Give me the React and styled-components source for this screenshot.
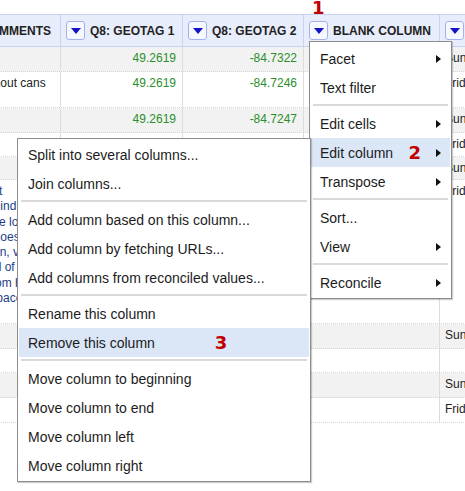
import React from "react";
import styled, { createGlobalStyle } from "styled-components";

const GlobalStyle = createGlobalStyle`
  html, body {
    margin: 0;
    padding: 0;
    background: #fff;
    overflow: hidden;
  }
  body {
    font-family: "Liberation Sans", Arial, sans-serif;
  }
`;

const COLUMN_WIDTHS = [109, 122, 121, 136, 120];
const GRID = COLUMN_WIDTHS.map((w) => `${w}px`).join(" ");

const Page = styled.div`
  position: relative;
  width: 465px;
  height: 491px;
  padding-top: 14px;
  box-sizing: border-box;
  overflow: hidden;
`;

const Viewport = styled.div`
  overflow: hidden;
`;

const Table = styled.div`
  width: 608px;
  margin-left: -48px;
`;

const HeaderRow = styled.div`
  display: grid;
  grid-template-columns: ${GRID};
  height: 33px;
  box-sizing: border-box;
  background: #e8edfc;
  border-top: 1px solid #c9d2f3;
  border-bottom: 1px solid #c9d2f3;
`;

const HeaderCell = styled.div`
  display: flex;
  align-items: center;
  gap: 5px;
  padding-left: 5px;
  border-right: 1px solid #c9d2f3;
  font-size: 12px;
  font-weight: bold;
  color: #222;
  white-space: nowrap;
  overflow: hidden;
`;

const DropButton = styled.span`
  flex: none;
  width: 19px;
  height: 19px;
  box-sizing: border-box;
  border: 1px solid #a3b2ee;
  border-radius: 3px;
  background: #f6f8ff;
  display: flex;
  align-items: center;
  justify-content: center;
  &::after {
    content: "";
    margin-top: 1px;
    border-left: 5px solid transparent;
    border-right: 5px solid transparent;
    border-top: 6px solid #1414c4;
  }
`;

const Row = styled.div`
  display: grid;
  grid-template-columns: ${GRID};
  height: ${({ $h }) => $h}px;
  box-sizing: border-box;
  background: ${({ $shaded }) => ($shaded ? "#f2f2f2" : "#fff")};
  border-bottom: 1px dotted #d4d4d4;
`;

const Cell = styled.div`
  padding: 4px 6px 0 5px;
  border-right: 1px solid #dcdcdc;
  font-size: 12px;
  line-height: 15px;
  color: ${({ $num }) => ($num ? "#2a8f2a" : "#222")};
  text-align: ${({ $num }) => ($num ? "right" : "left")};
  white-space: nowrap;
  overflow: hidden;
`;

const LongText = styled.div`
  line-height: 15.3px;
  color: #243c86;
`;

const Menu = styled.div`
  position: absolute;
  left: ${({ $x }) => $x}px;
  top: ${({ $y }) => $y}px;
  width: ${({ $w }) => $w}px;
  box-sizing: border-box;
  padding: ${({ $pad }) => $pad};
  background: #fff;
  border: 1px solid #8d8d8d;
  box-shadow: 1px 1px 1px rgba(0, 0, 0, 0.2);
  font-size: 14px;
  color: #1c1c1c;
`;

const Item = styled.div`
  display: flex;
  align-items: center;
  height: 29px;
  padding: 0 9px;
  white-space: nowrap;
  background: ${({ $active }) => ($active ? "#dbe6f7" : "transparent")};
`;

const Label = styled.span`
  flex: 1;
  display: flex;
  align-items: center;
`;

const Arrow = styled.span`
  width: 0;
  height: 0;
  border-top: 4.5px solid transparent;
  border-bottom: 4.5px solid transparent;
  border-left: 5px solid #111;
`;

const Separator = styled.div`
  height: 2px;
  margin: 2px 2px 3px;
  background: #dadada;
`;

const Mark = styled.span`
  font-family: "DejaVu Sans", "Liberation Sans", sans-serif;
  font-weight: bold;
  font-size: 18px;
  line-height: 1;
  color: #c00000;
  margin-left: ${({ $before }) => $before || 0}px;
  margin-right: ${({ $after }) => $after || 0}px;
`;

const TopMark = styled(Mark)`
  position: absolute;
  left: 312px;
  top: -1px;
`;

const headers = ["Comments", "Q8: Geotag 1", "Q8: Geotag 2", "Blank column", ""];

const longNote = [
  "Lots of it",
  "Left behind the shelter",
  "Put more lorem ipsum",
  "Which goes on",
  "In the bin, very full",
  "Bin's full of cups",
  "Then from here",
  "Lot of space",
];

const rows = [
  { h: 25, shaded: true, lat: "49.2619", lon: "-84.7322", day: "Sunday" },
  { h: 36, note: "Mix without cans", lat: "49.2619", lon: "-84.7246", day: "Friday" },
  { h: 25, shaded: true, lat: "49.2619", lon: "-84.7247", day: "Sunday" },
  { h: 24, lat: "49.2621", lon: "-84.7251", day: "Friday" },
  { h: 23, shaded: true, lat: "49.2618", lon: "-84.7320", day: "Sunday" },
  { h: 144, note: longNote, lat: "49.2622", lon: "-84.7249", day: "Friday" },
  { h: 25, shaded: true, lat: "49.2619", lon: "-84.7322", day: "Sunday" },
  { h: 24 },
  { h: 25, shaded: true, lat: "49.2617", lon: "-84.7319", day: "Sunday" },
  { h: 25, lat: "49.2620", lon: "-84.7248", day: "Friday" },
];

const columnMenu = [
  { label: "Facet", sub: true },
  { label: "Text filter" },
  "sep",
  { label: "Edit cells", sub: true },
  { label: "Edit column", sub: true, active: true, mark: "2" },
  { label: "Transpose", sub: true },
  "sep",
  { label: "Sort..." },
  { label: "View", sub: true },
  "sep",
  { label: "Reconcile", sub: true },
];

const editColumnMenu = [
  { label: "Split into several columns..." },
  { label: "Join columns..." },
  "sep",
  { label: "Add column based on this column..." },
  { label: "Add column by fetching URLs..." },
  { label: "Add columns from reconciled values..." },
  "sep",
  { label: "Rename this column" },
  { label: "Remove this column", active: true, inlineMark: "3" },
  "sep",
  { label: "Move column to beginning" },
  { label: "Move column to end" },
  { label: "Move column left" },
  { label: "Move column right" },
];

const MenuList = ({ items, ...rest }) => (
  <Menu {...rest}>
    {items.map((item, i) =>
      item === "sep" ? (
        <Separator key={i} />
      ) : (
        <Item key={i} $active={item.active}>
          <Label>
            {item.label}
            {item.inlineMark && <Mark $before={60}>{item.inlineMark}</Mark>}
          </Label>
          {item.mark && <Mark $after={15}>{item.mark}</Mark>}
          {item.sub && <Arrow />}
        </Item>
      )
    )}
  </Menu>
);

const App = () => {
  return (
    <>
      <GlobalStyle />
      <Page>
        <Viewport>
          <Table>
            <HeaderRow>
              {headers.map((title, i) => (
                <HeaderCell key={i}>
                  <DropButton />
                  {title.toUpperCase()}
                </HeaderCell>
              ))}
            </HeaderRow>
            {rows.map((row, i) => (
              <Row key={i} $h={row.h} $shaded={row.shaded}>
                <Cell>
                  {Array.isArray(row.note) ? (
                    <LongText>
                      {row.note.map((line, j) => (
                        <div key={j}>{line}</div>
                      ))}
                    </LongText>
                  ) : (
                    row.note
                  )}
                </Cell>
                <Cell $num>{row.lat}</Cell>
                <Cell $num>{row.lon}</Cell>
                <Cell />
                <Cell>{row.day}</Cell>
              </Row>
            ))}
          </Table>
        </Viewport>

        <TopMark>1</TopMark>
        <MenuList items={columnMenu} $x={309} $y={41} $w={143} $pad="2px 1px 1px" />
        <MenuList items={editColumnMenu} $x={17} $y={138} $w={294} $pad="1px" />
      </Page>
    </>
  );
};

export default App;
